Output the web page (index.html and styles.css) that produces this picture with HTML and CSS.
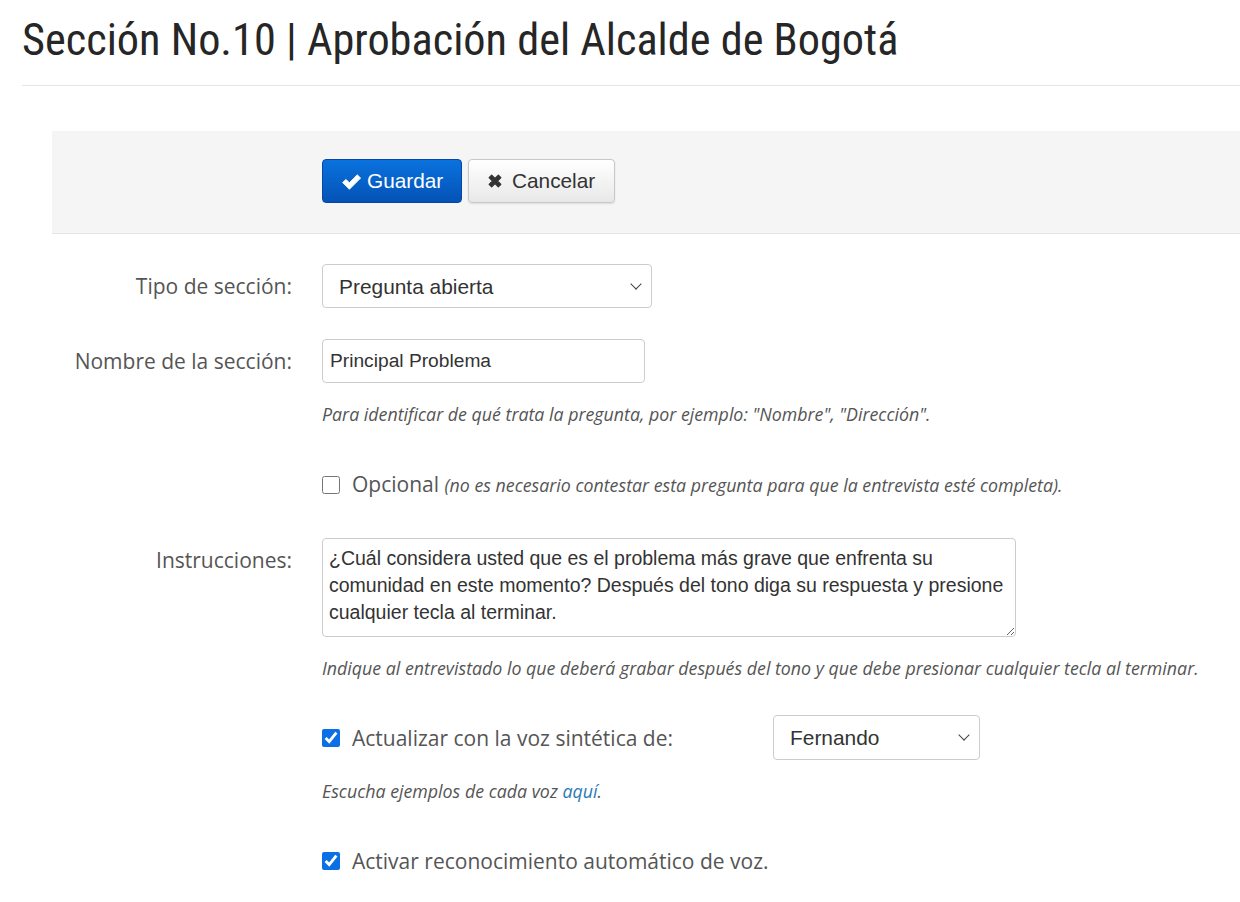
FILE: index.html
```html
<!DOCTYPE html>
<html lang="es">
<head>
    <meta charset="UTF-8">
    <meta name="viewport" content="width=device-width, initial-scale=1.0">
    <title>Sección No.10</title>
    <link rel="stylesheet" href="styles.css">
</head>
<body>
    <h1 class="pageTitle">Sección No.10 | Aprobación del Alcalde de Bogotá</h1>

    <form class="sectionForm">
        <div class="formActions">
            <button type="button" class="btn btnPrimary">
                <svg class="btnIcon" viewBox="0 0 20 20" width="21" height="21"><path d="M1.5 11 L4.8 8 L8 11.2 L15.4 3.6 L18.7 6.7 L8 17.4 Z" fill="#fff" stroke="#fff" stroke-width="0.8" stroke-linejoin="round"/></svg>
                <span>Guardar</span>
            </button>
            <button type="button" class="btn btnDefault">
                <svg class="btnIcon" viewBox="0 0 20 20" width="18" height="18"><path d="M3.5 6.3 L6.3 3.5 L10 7.2 L13.7 3.5 L16.5 6.3 L12.8 10 L16.5 13.7 L13.7 16.5 L10 12.8 L6.3 16.5 L3.5 13.7 L7.2 10 Z" fill="#333" stroke="#333" stroke-width="1.4" stroke-linejoin="round"/></svg>
                <span>Cancelar</span>
            </button>
        </div>

        <div class="formRow rowType">
            <label class="rowLabel" for="sectionType">Tipo de sección:</label>
            <div class="rowField">
                <div class="selectBox typeSelect">
                    <select id="sectionType">
                        <option>Pregunta abierta</option>
                    </select>
                </div>
            </div>
        </div>

        <div class="formRow rowName">
            <label class="rowLabel" for="sectionName">Nombre de la sección:</label>
            <div class="rowField">
                <input type="text" id="sectionName" class="textInput" value="Principal Problema">
                <p class="helpText">Para identificar de qué trata la pregunta, por ejemplo: "Nombre", "Dirección".</p>
            </div>
        </div>

        <div class="formRow rowOptional">
            <div class="rowLabel"></div>
            <div class="rowField">
                <label class="checkLine">
                    <input type="checkbox"><span>Opcional <em class="inlineNote">(no es necesario contestar esta pregunta para que la entrevista esté completa).</em></span>
                </label>
            </div>
        </div>

        <div class="formRow rowInstructions">
            <label class="rowLabel" for="instructions">Instrucciones:</label>
            <div class="rowField">
                <textarea id="instructions" class="textArea">¿Cuál considera usted que es el problema más grave que enfrenta su comunidad en este momento? Después del tono diga su respuesta y presione cualquier tecla al terminar.</textarea>
                <p class="helpText">Indique al entrevistado lo que deberá grabar después del tono y que debe presionar cualquier tecla al terminar.</p>
            </div>
        </div>

        <div class="formRow rowVoice">
            <div class="rowLabel"></div>
            <div class="rowField">
                <div class="voiceLine">
                    <label class="checkLine voiceCheck">
                        <input type="checkbox" checked><span>Actualizar con la voz sintética de:</span>
                    </label>
                    <div class="selectBox voiceSelect">
                        <select>
                            <option>Fernando</option>
                        </select>
                    </div>
                </div>
                <p class="helpText">Escucha ejemplos de cada voz <a href="#">aquí</a>.</p>
            </div>
        </div>

        <div class="formRow rowAsr">
            <div class="rowLabel"></div>
            <div class="rowField">
                <label class="checkLine">
                    <input type="checkbox" checked><span>Activar reconocimiento automático de voz.</span>
                </label>
            </div>
        </div>
    </form>
</body>
</html>
```

FILE: styles.css
```css
body {
    margin: 0;
    padding: 0;
    background: #fff;
    font-family: 'Open Sans', sans-serif;
    color: #555;
    overflow: hidden;
}

.pageTitle {
    margin: 0 0 0 22px;
    padding: 13px 0 18px;
    font-family: 'Roboto', sans-serif;
    font-stretch: condensed;
    font-weight: 400;
    font-size: 44.3px;
    line-height: 54px;
    color: #262626;
    border-bottom: 1px solid #e5e5e5;
}

.sectionForm {
    margin: 45px 0 0 52px;
}

.formActions {
    background: #f5f5f5;
    border-bottom: 1px solid #e5e5e5;
    padding: 28px 0 30px 270px;
    display: flex;
    gap: 6px;
}

.btn {
    display: flex;
    align-items: center;
    height: 44px;
    border-radius: 4px;
    font-family: 'Liberation Sans', Arial, sans-serif;
    font-size: 20.8px;
    cursor: pointer;
}

.btnPrimary {
    width: 140px;
    color: #fff;
    background: linear-gradient(#0a72de, #0452b6);
    border: 1px solid #0448a3;
    padding: 0 0 0 18px;
    gap: 5px;
}

.btnDefault {
    width: 147px;
    color: #333;
    background: linear-gradient(#fff, #e8e8e8);
    border: 1px solid #c8c8c8;
    box-shadow: 0 1px 2px rgba(0, 0, 0, 0.1);
    padding: 0 0 0 17px;
    gap: 8px;
}

.formRow {
    display: grid;
    grid-template-columns: 240px 1fr;
    column-gap: 30px;
}

.rowLabel {
    text-align: right;
    font-size: 21px;
    color: #555;
    line-height: 44px;
}

.rowType {
    margin-top: 30px;
}

.rowName {
    margin-top: 31px;
}

.rowOptional {
    margin-top: 43px;
}

.rowOptional .rowLabel,
.rowVoice .rowLabel,
.rowAsr .rowLabel {
    line-height: 30px;
}

.rowInstructions {
    margin-top: 38px;
}

.rowVoice {
    margin-top: 35px;
}

.rowAsr {
    margin-top: 43px;
}

.selectBox {
    position: relative;
}

.selectBox select {
    width: 100%;
    height: 44px;
    appearance: none;
    background: #fff;
    border: 1px solid #ccc;
    border-radius: 4px;
    padding: 0 16px;
    font-family: 'Liberation Sans', Arial, sans-serif;
    font-size: 20.9px;
    color: #333;
}

.selectBox::after {
    content: "";
    position: absolute;
    right: 12px;
    top: 16px;
    width: 7px;
    height: 7px;
    border-right: 1.8px solid #444;
    border-bottom: 1.8px solid #444;
    transform: rotate(45deg);
    pointer-events: none;
}

.typeSelect {
    width: 330px;
}

.voiceSelect {
    width: 207px;
    height: 45px;
}

.voiceSelect select {
    height: 45px;
}

.textInput {
    display: block;
    box-sizing: border-box;
    width: 323px;
    height: 44px;
    border: 1px solid #ccc;
    border-radius: 4px;
    padding: 0 7px;
    font-family: 'Liberation Sans', Arial, sans-serif;
    font-size: 19.2px;
    color: #333;
    margin: 0;
}

.helpText {
    margin: 19px 0 0;
    font-size: 17.8px;
    font-style: italic;
    color: #555;
    line-height: 24px;
}

.helpText a {
    color: #2a7ab8;
    text-decoration: none;
}

.checkLine {
    display: flex;
    align-items: center;
    font-size: 21px;
    color: #555;
    line-height: 30px;
}

.checkLine input {
    flex: none;
    width: 18px;
    height: 18px;
    margin: 0 12px 0 0;
    accent-color: #0b6fe6;
}

.inlineNote {
    font-size: 17.8px;
    color: #555;
}

.textArea {
    display: block;
    box-sizing: border-box;
    width: 694px;
    height: 99px;
    border: 1px solid #ccc;
    border-radius: 4px;
    padding: 6px 6px;
    margin: 0;
    font-family: 'Liberation Sans', Arial, sans-serif;
    font-size: 19.5px;
    line-height: 27px;
    color: #333;
    resize: both;
}

.voiceLine {
    display: flex;
    align-items: center;
}

.voiceCheck {
    width: 451px;
}
```
